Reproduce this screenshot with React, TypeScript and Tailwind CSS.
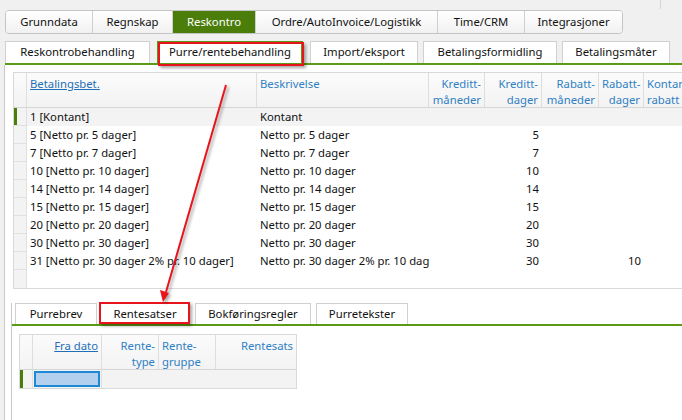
import React from "react";

type Tab = { label: string; w: number; active?: boolean };

const topTabs: Tab[] = [
  { label: "Grunndata", w: 86 },
  { label: "Regnskap", w: 80 },
  { label: "Reskontro", w: 83, active: true },
  { label: "Ordre/AutoInvoice/Logistikk", w: 182 },
  { label: "Time/CRM", w: 87 },
  { label: "Integrasjoner", w: 98 },
];

const subTabs: (Tab & { ml: number })[] = [
  { label: "Reskontrobehandling", w: 145, ml: 0 },
  { label: "Purre/rentebehandling", w: 146, ml: 7, active: true },
  { label: "Import/eksport", w: 108, ml: 7 },
  { label: "Betalingsformidling", w: 134, ml: 5 },
  { label: "Betalingsmåter", w: 108, ml: 5 },
];

const lowerTabs = [
  { label: "Purrebrev", w: 82, ml: 0 },
  { label: "Rentesatser", w: 90, ml: 3 },
  { label: "Bokføringsregler", w: 116, ml: 5 },
  { label: "Purretekster", w: 92, ml: 5 },
];

const rows: { id: string; desc: string; days: string; rabatt?: string }[] = [
  { id: "1 [Kontant]", desc: "Kontant", days: "" },
  { id: "5 [Netto pr. 5 dager]", desc: "Netto pr. 5 dager", days: "5" },
  { id: "7 [Netto pr. 7 dager]", desc: "Netto pr. 7 dager", days: "7" },
  { id: "10 [Netto pr. 10 dager]", desc: "Netto pr. 10 dager", days: "10" },
  { id: "14 [Netto pr. 14 dager]", desc: "Netto pr. 14 dager", days: "14" },
  { id: "15 [Netto pr. 15 dager]", desc: "Netto pr. 15 dager", days: "15" },
  { id: "20 [Netto pr. 20 dager]", desc: "Netto pr. 20 dager", days: "20" },
  { id: "30 [Netto pr. 30 dager]", desc: "Netto pr. 30 dager", days: "30" },
  {
    id: "31 [Netto pr. 30 dager 2% pr. 10 dager]",
    desc: "Netto pr. 30 dager 2% pr. 10 dager",
    days: "30",
    rabatt: "10",
  },
];

function HeadCell({
  w,
  lines,
  align = "right",
  link,
}: {
  w: number;
  lines: string[];
  align?: "left" | "right";
  link?: boolean;
}) {
  return (
    <div
      className={`shrink-0 border-r border-[#dedede] px-[3px] pt-[3px] leading-[16px] text-[#2f80c4] ${
        align === "right" ? "text-right" : "text-left"
      }`}
      style={{ width: w }}
    >
      {lines.map((l) => (
        <div key={l} className={link ? "underline text-[#1f6fb8]" : ""}>
          {l}
        </div>
      ))}
    </div>
  );
}

export default function App() {
  return (
    <div className="relative w-[682px] h-[420px] overflow-hidden bg-[#f0f0f0] font-['Segoe_UI','Noto_Sans',sans-serif] text-[11.3px] text-[#111]">
      {/* top line detail */}
      <div className="absolute left-[660px] top-0 h-[9px] border-l border-[#d4d4d4]" />

      {/* main module tabs */}
      <div className="pt-[10px] pl-[5px]">
        <div className="flex w-fit h-[24px] rounded-[4px] border border-[#c4c4c4] overflow-hidden">
          {topTabs.map((t, i) => (
            <div
              key={t.label}
              className={`flex items-center justify-center ${i > 0 ? "border-l border-[#cfcfcf]" : ""} ${
                t.active
                  ? "bg-[#4b7d0b] text-white"
                  : "bg-gradient-to-b from-white to-[#f1f1f1]"
              }`}
              style={{ width: t.w }}
            >
              {t.label}
            </div>
          ))}
        </div>
      </div>

      {/* sub tabs */}
      <div className="mt-[7px] pl-[5px] flex items-end h-[22px]">
        {subTabs.map((t) => (
          <div
            key={t.label}
            className={`h-[22px] flex items-center justify-center bg-white border-t border-x ${
              t.active ? "border-[#5b9a14] border-x-2" : "border-[#d0d0d0]"
            }`}
            style={{ width: t.w, marginLeft: t.ml }}
          >
            {t.label}
          </div>
        ))}
      </div>
      <div className="ml-[5px] h-[2px] bg-[#5b9a14]" />

      {/* content panel */}
      <div className="ml-[4px] h-[355px] border-l border-[#c9c9c9] bg-white pt-[7px] pl-[8px]">
        {/* grid 1 */}
        <div className="w-[700px] border border-[#d9d9d9]">
          <div className="flex h-[35px] border-b border-[#d6d6d6] bg-gradient-to-b from-[#fbfbfb] to-[#f3f3f3]">
            <div className="w-[13px] shrink-0 border-r border-[#dedede]" />
            <HeadCell w={230} lines={["Betalingsbet."]} align="left" link />
            <HeadCell w={172} lines={["Beskrivelse"]} align="left" />
            <HeadCell w={56} lines={["Kreditt-", "måneder"]} />
            <HeadCell w={57} lines={["Kreditt-", "dager"]} />
            <HeadCell w={57} lines={["Rabatt-", "måneder"]} />
            <HeadCell w={45} lines={["Rabatt-", "dager"]} />
            <HeadCell w={62} lines={["Kontant-", "rabatt"]} align="left" />
          </div>
          {rows.map((r, i) => (
            <div key={r.id} className={`flex h-[18px] leading-[18px] ${i === 0 ? "bg-[#f3f3f3]" : ""}`}>
              <div className="relative w-[13px] shrink-0 border-r border-b border-[#e0e0e0] bg-[#f3f3f3]">
                {i === 0 && <div className="absolute left-0 top-0 h-full w-[3px] bg-[#4b7d0b]" />}
              </div>
              <div className="w-[230px] shrink-0 px-[3px] whitespace-nowrap overflow-hidden">{r.id}</div>
              <div className="w-[172px] shrink-0 px-[3px] whitespace-nowrap overflow-hidden">{r.desc}</div>
              <div className="w-[56px] shrink-0" />
              <div className="w-[57px] shrink-0 px-[3px] text-right">{r.days}</div>
              <div className="w-[57px] shrink-0" />
              <div className="w-[45px] shrink-0 px-[3px] text-right">{r.rabatt ?? ""}</div>
            </div>
          ))}
          <div className="flex h-[18px]">
            <div className="w-[13px] shrink-0 border-r border-[#e0e0e0] bg-[#f3f3f3]" />
          </div>
        </div>

        {/* lower tabs */}
        <div className="mt-[14px] ml-[-2px] border-l border-[#c9c9c9] h-[140px]">
          <div className="pl-[3px] flex items-end h-[21px]">
            {lowerTabs.map((t) => (
              <div
                key={t.label}
                className="h-[21px] flex items-center justify-center bg-white border-t border-x border-[#d0d0d0]"
                style={{ width: t.w, marginLeft: t.ml }}
              >
                {t.label}
              </div>
            ))}
          </div>
          <div className="h-[2px] bg-[#5b9a14]" />

          {/* grid 2 */}
          <div className="mt-[8px] ml-[7px] w-[278px] border border-[#d9d9d9]">
            <div className="flex h-[35px] border-b border-[#d6d6d6] bg-gradient-to-b from-[#fbfbfb] to-[#f3f3f3]">
              <div className="w-[13px] shrink-0 border-r border-[#dedede]" />
              <HeadCell w={69} lines={["Fra dato"]} link />
              <HeadCell w={57} lines={["Rente-", "type"]} />
              <HeadCell w={57} lines={["Rente-", "gruppe"]} align="left" />
              <div className="flex-1 px-[3px] pt-[3px] leading-[16px] text-right text-[#2f80c4]">Rentesats</div>
            </div>
            <div className="flex h-[18px] bg-[#f3f3f3]">
              <div className="relative w-[13px] shrink-0 border-r border-[#e0e0e0] bg-[#f3f3f3]">
                <div className="absolute left-0 top-0 h-full w-[3px] bg-[#4b7d0b]" />
              </div>
              <div className="w-[69px] shrink-0 p-[1px] border-r border-[#e0e0e0]">
                <div className="h-full border-2 border-[#1e8ad6] bg-[#b3d0ef]" />
              </div>
            </div>
          </div>
        </div>
      </div>

      {/* red annotations */}
      <div className="absolute left-[158px] top-[42px] w-[146px] h-[24px] border-2 border-[#e8141b] shadow-[2px_2px_3px_rgba(0,0,0,0.35)]" />
      <div className="absolute left-[99px] top-[302px] w-[91px] h-[22px] border-2 border-[#e8141b] shadow-[2px_2px_3px_rgba(0,0,0,0.35)]" />
      <svg
        className="absolute left-0 top-0 pointer-events-none [filter:drop-shadow(2px_2px_1.5px_rgba(0,0,0,0.35))]"
        width="682"
        height="420"
      >
        <line x1="226" y1="85" x2="166" y2="292" stroke="#e8141b" strokeWidth="2" />
        <polygon points="163,302 160,290 169,293" fill="#e8141b" />
      </svg>
    </div>
  );
}
